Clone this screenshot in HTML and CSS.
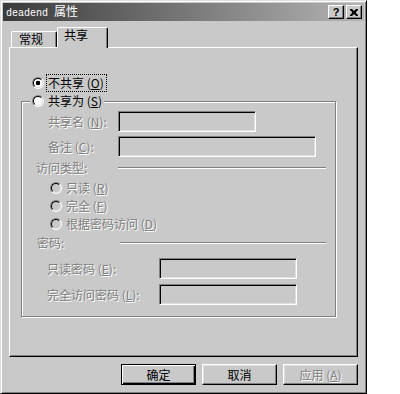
FILE: index.html
```html
<!DOCTYPE html>
<html>
<head>
<meta charset="utf-8">
<link rel="stylesheet" href="styles.css">
</head>
<body>

<div class="dialog">
  <div class="titlebar">
    <span class="title">deadend <span class="title-cjk">属性</span></span>
    <div class="caps">
      <span class="cap">?</span>
      <span class="cap">
        <svg width="8" height="7" viewBox="0 0 8 7"><path d="M0 0h2l2 2 2-2h2v1l-2 2v1l2 2v1h-2l-2-2-2 2h-2v-1l2-2v-1l-2-2z" fill="#000"/></svg>
      </span>
    </div>
  </div>

  <div class="tabs">
    <div class="tab">常规</div>
    <div class="tab active">共享</div>
  </div>

  <div class="panel">
    <div class="row-top">
      <span class="radio checked"></span>
      <span class="focus">不共享 (<u>O</u>)</span>
    </div>

    <fieldset class="group">
      <legend><span class="radio"></span><span>共享为 (<u>S</u>)</span></legend>

      <div class="field first">
        <span class="lbl dim">共享名 (<u>N</u>):</span>
        <span class="box short"></span>
      </div>
      <div class="field">
        <span class="lbl dim">备注 (<u>C</u>):</span>
        <span class="box long"></span>
      </div>

      <div class="sep">
        <span class="dim">访问类型:</span>
        <span class="line"></span>
      </div>
      <div class="opt first"><span class="radio off"></span><span class="dim">只读 (<u>R</u>)</span></div>
      <div class="opt"><span class="radio off"></span><span class="dim">完全 (<u>F</u>)</span></div>
      <div class="opt"><span class="radio off"></span><span class="dim">根据密码访问 (<u>D</u>)</span></div>

      <div class="sep pw">
        <span class="dim">密码:</span>
        <span class="line"></span>
      </div>
      <div class="field pwd first">
        <span class="lbl dim">只读密码 (<u>E</u>):</span>
        <span class="box short"></span>
      </div>
      <div class="field pwd">
        <span class="lbl dim">完全访问密码 (<u>L</u>):</span>
        <span class="box short"></span>
      </div>
    </fieldset>
  </div>

  <div class="buttons">
    <span class="btn default">确定</span>
    <span class="btn">取消</span>
    <span class="btn"><span class="dim">应用 (<u>A</u>)</span></span>
  </div>
</div>

</body>
</html>
```

FILE: styles.css
```css
body {
  margin: 0;
  background: #fff;
  font-family: "Noto Sans CJK SC", sans-serif;
  font-size: 12px;
  line-height: 16px;
  color: #000;
}

.dialog {
  width: 367px;
  height: 394px;
  box-sizing: border-box;
  background: #c9c9c9;
  border: 1px solid;
  border-color: #dfdfdf #000 #000 #dfdfdf;
  box-shadow: inset 1px 1px 0 #fff, inset -1px -1px 0 #808080;
  padding: 2px;
}

/* title bar */
.titlebar {
  height: 18px;
  display: flex;
  align-items: center;
  justify-content: space-between;
  background: linear-gradient(to right, #3a3a3a, #b4b4b4);
  color: #fff;
  padding: 0 2px 0 3px;
}
.title { font-family: "Liberation Mono", monospace; font-size: 10px; }
.title-cjk { font-family: "Noto Sans CJK SC", sans-serif; font-size: 12px; }
.caps { display: flex; gap: 2px; }
.cap {
  width: 16px;
  height: 14px;
  box-sizing: border-box;
  background: #c9c9c9;
  border: 1px solid;
  border-color: #fff #000 #000 #fff;
  box-shadow: inset -1px -1px 0 #808080;
  color: #000;
  font: bold 11px/12px "Liberation Sans", sans-serif;
  display: flex;
  align-items: center;
  justify-content: center;
}

/* tabs */
.tabs {
  display: flex;
  align-items: flex-end;
  height: 19px;
  margin-top: 7px;
  padding-left: 8px;
}
.tab {
  width: 46px;
  height: 16px;
  box-sizing: border-box;
  border: 1px solid;
  border-bottom: 0;
  border-color: #fff #000 #000 #fff;
  border-radius: 2px 2px 0 0;
  box-shadow: inset -1px 0 0 #808080;
  padding-left: 7px;
  line-height: 14px;
}
.tab.active {
  width: 51px;
  height: 21px;
  margin-bottom: -1px;
  background: #c9c9c9;
  position: relative;
  z-index: 1;
  padding-left: 6px;
  line-height: 14px;
}

/* panel */
.panel {
  margin: 0 6px;
  height: 310px;
  box-sizing: border-box;
  border: 1px solid;
  border-color: #fff #000 #000 #fff;
  box-shadow: inset -1px -1px 0 #808080;
  padding-top: 27px;
}
.row-top {
  display: flex;
  align-items: center;
  height: 16px;
  padding-left: 22px;
  gap: 4px;
}
.focus { outline: 1px dotted #000; padding: 0 2px 0 1px; margin-left: -1px; }

.radio {
  width: 12px;
  height: 12px;
  box-sizing: border-box;
  border-radius: 50%;
  border: 1px solid;
  border-color: #808080 #fff #fff #808080;
  flex: none;
}
.radio::before {
  content: "";
  display: block;
  width: 10px;
  height: 10px;
  box-sizing: border-box;
  border-radius: 50%;
  border: 1px solid;
  border-color: #000 #dfdfdf #dfdfdf #000;
  background: #fff;
}
.radio.checked::before { background: radial-gradient(circle, #000 2px, #fff 2.6px); }
.radio.off::before { background: #c9c9c9; }

/* group box */
.group {
  margin: 2px 0 0 11px;
  width: 315px;
  height: 224px;
  box-sizing: border-box;
  padding: 0;
  border: 1px solid #808080;
  box-shadow: inset 1px 1px 0 #fff, 1px 1px 0 #fff;
  min-inline-size: 0;
}
.group legend {
  margin-left: 8px;
  padding: 0 2px;
  background: #c9c9c9;
  display: flex;
  align-items: center;
  gap: 4px;
  height: 16px;
}

.dim { color: #808080; text-shadow: 1px 1px 0 #fff; }
.dim u { text-decoration-color: #808080; }

.field {
  display: flex;
  align-items: center;
  height: 21px;
  margin-top: 4px;
  padding-left: 26px;
}
.field.first { margin-top: 2px; }
.field.pwd { margin-top: 5px; padding-left: 25px; }
.field.pwd.first { margin-top: 8px; }
.lbl { width: 70px; flex: none; }
.field.pwd .lbl { width: 112px; }

.box {
  height: 21px;
  box-sizing: border-box;
  border: 1px solid;
  border-color: #808080 #fff #fff #808080;
  box-shadow: inset 1px 1px 0 #000, inset -1px -1px 0 #dfdfdf;
}
.box.short { width: 138px; }
.box.long { width: 198px; }

.sep {
  display: flex;
  align-items: center;
  height: 14px;
  margin-top: 4px;
  padding-left: 14px;
  padding-right: 9px;
}
.sep .line {
  flex: 1;
  height: 0;
  border-top: 1px solid #808080;
  border-bottom: 1px solid #fff;
}
.sep > .dim { width: 82px; }
.sep.pw { margin-top: 4px; padding-left: 15px; }
.sep.pw > .dim { width: 83px; }

.opt {
  display: flex;
  align-items: center;
  gap: 4px;
  height: 16px;
  margin-top: 2px;
  padding-left: 28px;
}
.opt.first { margin-top: 5px; }

/* bottom buttons */
.buttons {
  display: flex;
  justify-content: flex-end;
  gap: 6px;
  margin-top: 7px;
  padding-right: 6px;
}
.btn {
  width: 75px;
  height: 21px;
  box-sizing: border-box;
  border: 1px solid;
  border-color: #fff #000 #000 #fff;
  box-shadow: inset -1px -1px 0 #808080, inset 1px 1px 0 #dfdfdf;
  display: flex;
  align-items: center;
  justify-content: center;
}
.btn.default {
  border: 1px solid #000;
  box-shadow: inset 1px 1px 0 #fff, inset -1px -1px 0 #000, inset -2px -2px 0 #808080;
}
```
